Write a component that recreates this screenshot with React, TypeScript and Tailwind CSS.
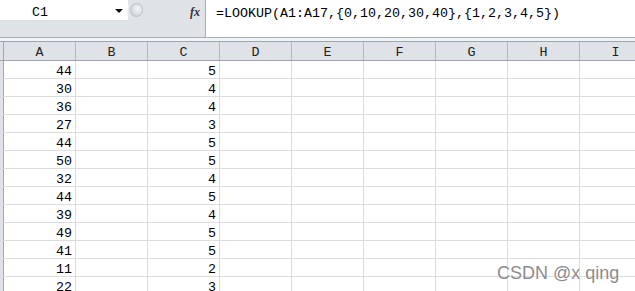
const COLS = ["A", "B", "C", "D", "E", "F", "G", "H", "I"];

const ROWS: [number, number][] = [
  [44, 5],
  [30, 4],
  [36, 4],
  [27, 3],
  [44, 5],
  [50, 5],
  [32, 4],
  [44, 5],
  [39, 4],
  [49, 5],
  [41, 5],
  [11, 2],
  [22, 3],
];

const mono = { fontFamily: '"Liberation Mono", "DejaVu Sans Mono", monospace' };

function TopBar() {
  return (
    <div className="flex h-[38px] border-b border-[#a7adb5] bg-white">
      {/* Nombre + botones */}
      <div className="relative w-[206px] shrink-0 border-r border-[#a7adb5] bg-[#dfe3e8]">
        <div className="flex h-[20px] w-[128px] items-center bg-white">
          <span className="w-[80px] pt-[5px] text-center text-[13.33px] leading-none text-black" style={mono}>
            C1
          </span>
          <span className="ml-auto mr-[5px] mt-[2px] h-0 w-0 border-x-[4px] border-t-[4px] border-x-transparent border-t-[#111]" />
        </div>
        <div className="absolute left-[127px] top-[1px] h-[19px] w-[78px] rounded-l-[10px] border-l border-[#eef0f3] bg-[#dfe3e8]" />
        <div className="absolute left-[130px] top-[3px] h-[14px] w-[13px] rounded-full border border-[#b9c0c8] bg-[radial-gradient(circle_at_60%_40%,#f4f5f7,#d5d9de_65%,#bcc2c9)]" />
        <span
          className="absolute left-[190px] top-[3px] text-[12px] font-bold italic text-[#333]"
          style={{ fontFamily: '"Liberation Serif", serif' }}
        >
          fx
        </span>
      </div>
      {/* Barra de fórmulas */}
      <div className="flex-1 pl-[10px] pt-[6px] text-[13.33px] leading-[16px] text-black" style={mono}>
        =LOOKUP(A1:A17,{"{"}0,10,20,30,40{"}"},{"{"}1,2,3,4,5{"}"})
      </div>
    </div>
  );
}

function Header() {
  return (
    <div className="flex h-[20px] border-y border-[#9ea6b0] bg-[#dfe3e8]">
      <div className="w-[4px] shrink-0 border-r border-[#9ea6b0]" />
      {COLS.map((c) => (
        <div
          key={c}
          className="flex w-[72px] shrink-0 items-center justify-center border-r border-[#b3bac3] pt-[4px] text-[13.33px] leading-none text-[#222]"
          style={mono}
        >
          {c}
        </div>
      ))}
    </div>
  );
}

function Row({ a, c }: { a: number; c: number }) {
  return (
    <div className="flex h-[18px] border-b border-[#dadcdd]">
      <div className="w-[4px] shrink-0 border-r border-[#9ea6b0] bg-[#dfe3e8]" />
      {COLS.map((col) => (
        <div
          key={col}
          className="flex w-[72px] shrink-0 items-center justify-end border-r border-[#dadcdd] pr-[3px] pt-[4px] text-[13.33px] leading-none text-black"
          style={mono}
        >
          {col === "A" ? a : col === "C" ? c : ""}
        </div>
      ))}
    </div>
  );
}

export default function App() {
  return (
    <div className="relative h-[291px] w-[635px] overflow-hidden bg-white">
      <TopBar />
      <div className="h-[3px] bg-[#f1f3f5]" />
      <Header />
      {ROWS.map(([a, c], i) => (
        <Row key={i} a={a} c={c} />
      ))}

      {/* marca de agua */}
      <div
        className="absolute left-[497px] top-[260px] text-[18px] text-[#8c8c8c]"
        style={{
          fontFamily: '"Liberation Sans", Arial, sans-serif',
          textShadow: "0 0 1px #fff, 0 0 1px #fff",
        }}
      >
        CSDN @x qing
      </div>
    </div>
  );
}
